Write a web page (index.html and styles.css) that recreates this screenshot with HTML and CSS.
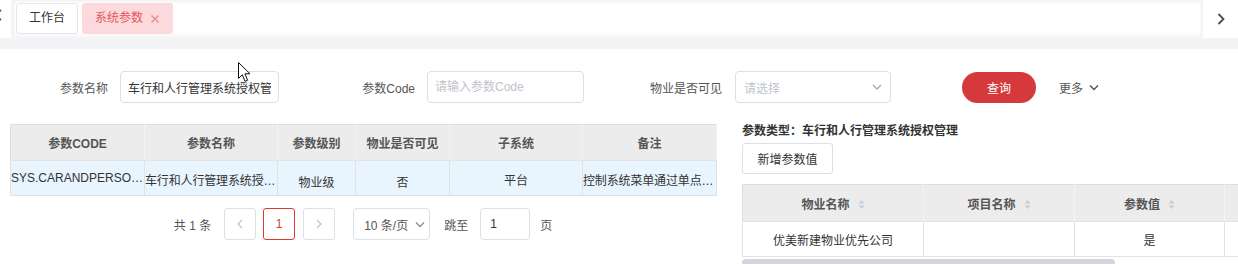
FILE: index.html
```html
<!doctype html>
<html lang="zh-CN">
<head>
	<meta charset="UTF-8">
	<title>系统参数</title>

	<link rel="stylesheet" href="styles.css">
</head>
<body>

	<!-- 顶部标签栏 -->
	<div class="tabs-bar">
		<div class="tabs-prev">
			<svg width="12" height="14" viewBox="0 0 12 14"><polyline points="9,2 3,7 9,12" fill="none" stroke="#4a5565" stroke-width="1.8"/></svg>
		</div>
		<div class="tabs-scroll">
			<span class="tab">工作台</span>
			<span class="tab tab-active">系统参数<svg class="tab-close" width="8" height="8" viewBox="0 0 8 8"><path d="M0.5 0.5 L7.5 7.5 M7.5 0.5 L0.5 7.5" stroke="#e98a8d" stroke-width="1.4"/></svg></span>
		</div>
		<div class="tabs-next">
			<svg width="8" height="12" viewBox="0 0 8 12"><polyline points="1.5,1 6.5,6 1.5,11" fill="none" stroke="#3f4a5a" stroke-width="1.8"/></svg>
		</div>
	</div>
	<div class="tabs-gap"></div>

	<div class="page">

		<!-- 搜索条件 -->
		<div class="search">
			<label class="field field-name">
				<span class="field-label">参数名称</span>
				<input class="field-input" type="text" value="车行和人行管理系统授权管理">
			</label>
			<label class="field field-code">
				<span class="field-label">参数Code</span>
				<input class="field-input" type="text" placeholder="请输入参数Code">
			</label>
			<div class="field field-visible">
				<span class="field-label">物业是否可见</span>
				<div class="select">
					<span class="select-placeholder">请选择</span>
					<svg width="10" height="6" viewBox="0 0 10 6"><polyline points="1,1 5,5 9,1" fill="none" stroke="#a4a9b2" stroke-width="1.3"/></svg>
				</div>
			</div>
			<button class="btn-query" type="button">查询</button>
			<a class="more" href="#">更多<svg width="10" height="7" viewBox="0 0 10 7"><polyline points="1,1.5 5,5.5 9,1.5" fill="none" stroke="#555" stroke-width="1.4"/></svg></a>
		</div>

		<div class="panels">

			<!-- 参数列表 -->
			<div class="panel-left">
				<table class="grid grid-params">
					<colgroup>
						<col style="width:134px"><col style="width:133px"><col style="width:78px">
						<col style="width:94px"><col style="width:133px"><col style="width:134px">
					</colgroup>
					<thead>
						<tr>
							<th>参数CODE</th>
							<th>参数名称</th>
							<th>参数级别</th>
							<th>物业是否可见</th>
							<th>子系统</th>
							<th>备注</th>
						</tr>
					</thead>
					<tbody>
						<tr class="row-selected">
							<td class="cell-left">SYS.CARANDPERSONAUTHMANAGE</td>
							<td class="cell-left cell-tight">车行和人行管理系统授权管理</td>
							<td class="cell-low">物业级</td>
							<td class="cell-low">否</td>
							<td>平台</td>
							<td class="cell-left cell-tight">控制系统菜单通过单点登录跳转</td>
						</tr>
					</tbody>
				</table>

				<div class="pager">
					<span class="pager-total">共 1 条</span>
					<span class="pager-btn pager-prev">
						<svg width="6" height="10" viewBox="0 0 6 10"><polyline points="5,1 1,5 5,9" fill="none" stroke="#c0c4cc" stroke-width="1.2"/></svg>
					</span>
					<span class="pager-btn pager-current">1</span>
					<span class="pager-btn pager-next">
						<svg width="6" height="10" viewBox="0 0 6 10"><polyline points="1,1 5,5 1,9" fill="none" stroke="#c0c4cc" stroke-width="1.2"/></svg>
					</span>
					<span class="pager-size">10 条/页<svg width="10" height="7" viewBox="0 0 10 7"><polyline points="1,1.5 5,5.5 9,1.5" fill="none" stroke="#8a9099" stroke-width="1.4"/></svg></span>
					<span class="pager-jump">跳至</span>
					<input class="pager-input" type="text" value="1">
					<span>页</span>
				</div>
			</div>

			<!-- 参数值 -->
			<div class="panel-right">
				<div class="type-title">参数类型：车行和人行管理系统授权管理</div>
				<button class="btn-add" type="button">新增参数值</button>

				<table class="grid grid-values">
					<colgroup>
						<col style="width:181px"><col style="width:151px"><col style="width:150px"><col style="width:220px">
					</colgroup>
					<thead>
						<tr>
							<th>物业名称<svg class="sort" width="7" height="11" viewBox="0 0 7 11"><path d="M0.5 4.5 L3.5 1 L6.5 4.5Z M0.5 6.5 L3.5 10 L6.5 6.5Z" fill="#c8ccd3"/></svg></th>
							<th>项目名称<svg class="sort" width="7" height="11" viewBox="0 0 7 11"><path d="M0.5 4.5 L3.5 1 L6.5 4.5Z M0.5 6.5 L3.5 10 L6.5 6.5Z" fill="#c8ccd3"/></svg></th>
							<th>参数值<svg class="sort" width="7" height="11" viewBox="0 0 7 11"><path d="M0.5 4.5 L3.5 1 L6.5 4.5Z M0.5 6.5 L3.5 10 L6.5 6.5Z" fill="#c8ccd3"/></svg></th>
							<th>操作</th>
						</tr>
					</thead>
					<tbody>
						<tr>
							<td>优美新建物业优先公司</td>
							<td></td>
							<td>是</td>
							<td></td>
						</tr>
					</tbody>
				</table>
				<div class="hscroll"></div>
			</div>

		</div>
	</div>

	<!-- 鼠标指针 -->
	<svg class="cursor" width="13" height="21" viewBox="0 0 13 21"><path d="M0.5 0.5 L0.5 16.5 L4.3 12.8 L7 19.3 L9.6 18.2 L6.9 11.8 L12 11.8 Z" fill="#fff" stroke="#111" stroke-width="1"/></svg>

</body>
</html>
```

FILE: styles.css
```css
html, body {
	margin: 0px;
	padding: 0px;
	overflow: hidden;
}

body {
	font: 12px "Liberation Sans", "Noto Sans CJK SC", sans-serif;
	color: #333;
	background: #fff;
}

a {
	text-decoration: none;
	color: #555;
}

/*标签栏*/
.tabs-bar {
	display: flex;
	height: 38px;
	background: #f3f4f6;
}

.tabs-prev {
	width: 11px;
	background: #fff;
	overflow: hidden;
}

.tabs-prev svg {
	display: block;
	margin: 8px 0 0 -8px;
}

.tabs-scroll {
	flex: 1;
	height: 37px;
	box-sizing: border-box;
	margin-left: 3px;
	padding: 3px 2px 0;
	display: flex;
	align-items: flex-start;
	gap: 4px;
	background: #fff;
	box-shadow: inset 0 2px 3px rgba(0,0,0,.05), inset 0 -3px 3px rgba(0,0,0,.03);
}

.tabs-next {
	width: 35px;
	margin-left: 2px;
	display: flex;
	align-items: center;
	justify-content: center;
	background: #fff;
}

.tab {
	height: 31px;
	box-sizing: border-box;
	line-height: 29px;
	padding: 0 12px;
	border: 1px solid #e4e7ed;
	border-radius: 3px;
	background: #fff;
	color: #333;
	display: flex;
	align-items: center;
}

.tab-active {
	padding: 0 13px 0 12px;
	background: #fcd9dc;
	border-color: #fcd9dc;
	color: #e5585b;
}

.tab-close {
	margin-left: 8px;
}

.tabs-gap {
	height: 11px;
	background: #f3f4f6;
}

/*内容区*/
.page {
	padding: 22px 0 0 10px;
}

.search {
	display: flex;
	align-items: center;
	height: 32px;
}

.field {
	display: flex;
	align-items: center;
	gap: 12px;
}

.field-label {
	text-align: right;
	color: #555;
	flex: none;
}

.field-name .field-label { width: 98px; }
.field-code .field-label { width: 136px; }
.field-visible .field-label { width: 138px; }
.field-visible { gap: 13px; }

.field-input {
	height: 32px;
	box-sizing: border-box;
	padding: 0 7px;
	border: 1px solid #dcdfe6;
	border-radius: 4px;
	font: 12px "Liberation Sans", "Noto Sans CJK SC", sans-serif;
	color: #333;
	outline: none;
}

.field-name .field-input { width: 159px; }
.field-code .field-input { width: 157px; }

.field-input::placeholder {
	color: #c0c4cc;
}

.select {
	width: 156px;
	height: 32px;
	box-sizing: border-box;
	padding: 0 8px 0 8px;
	border: 1px solid #dcdfe6;
	border-radius: 4px;
	display: flex;
	align-items: center;
	justify-content: space-between;
}

.select-placeholder {
	color: #c0c4cc;
}

.btn-query {
	margin-left: 71px;
	width: 74px;
	height: 31px;
	border: none;
	border-radius: 16px;
	background: #d6393b;
	color: #fff;
	font: 12px "Liberation Sans", "Noto Sans CJK SC", sans-serif;
	cursor: pointer;
}

.more {
	margin-left: 23px;
	display: flex;
	align-items: center;
	gap: 6px;
	color: #555;
}

.panels {
	display: flex;
	gap: 26px;
	margin-top: 21px;
}

.panel-left {
	width: 706px;
	flex: none;
}

.panel-right {
	flex: 1;
	min-width: 0;
	overflow: hidden;
}

/*表格*/
.grid {
	border-collapse: collapse;
	table-layout: fixed;
}

.grid th {
	height: 35px;
	padding: 0;
	background: #ececec;
	color: #555;
	font-weight: bold;
	text-align: center;
	border: 1px solid #dedede;
	border-right-color: #f3f3f3;
	border-bottom-color: #e4e4e4;
}

.grid td {
	height: 34px;
	padding: 0;
	text-align: center;
	color: #333;
	border: 1px solid #e2e2e2;
	white-space: nowrap;
	overflow: hidden;
	text-overflow: ellipsis;
}

.grid-params {
	width: 706px;
}

.row-selected td {
	background: #e9f5fe;
	vertical-align: top;
	padding-top: 10px;
	height: 24px;
}

.grid .cell-left {
	text-align: left;
}

.grid .cell-tight {
	letter-spacing: -0.15px;
}

.row-selected .cell-low {
	padding-top: 12px;
	height: 22px;
}

/*分页*/
.pager {
	display: flex;
	align-items: center;
	justify-content: center;
	height: 32px;
	margin-top: 12px;
	color: #555;
}

.pager-total {
	margin-right: 13px;
}

.pager-btn {
	width: 32px;
	height: 32px;
	box-sizing: border-box;
	border: 1px solid #dcdfe6;
	border-radius: 3px;
	display: flex;
	align-items: center;
	justify-content: center;
}

.pager-prev { margin-right: 7px; }
.pager-next { margin-left: 8px; }

.pager-current {
	border-color: #e2392f;
	color: #e2392f;
}

.pager-size {
	width: 77px;
	height: 32px;
	box-sizing: border-box;
	margin: 0 14px 0 18px;
	padding-left: 10px;
	gap: 7px;
	border: 1px solid #dcdfe6;
	border-radius: 4px;
	display: flex;
	align-items: center;
}

.pager-jump {
	margin-right: 12px;
}

.pager-input {
	width: 50px;
	height: 32px;
	box-sizing: border-box;
	margin-right: 10px;
	padding: 0 9px;
	border: 1px solid #dcdfe6;
	border-radius: 4px;
	font: 12px "Liberation Sans", "Noto Sans CJK SC", sans-serif;
	color: #333;
	outline: none;
}

/*右侧参数值*/
.type-title {
	font-weight: bold;
	line-height: 14px;
	color: #333;
}

.btn-add {
	display: block;
	margin-top: 5px;
	width: 91px;
	height: 31px;
	background: #fff;
	border: 1px solid #dcdfe6;
	border-radius: 3px;
	font: 12px "Liberation Sans", "Noto Sans CJK SC", sans-serif;
	color: #333;
}

.grid-values {
	width: 702px;
	margin-top: 10px;
}

.grid-values th {
	height: 36px;
}

.sort {
	margin-left: 8px;
	vertical-align: -1px;
}

.hscroll {
	width: 373px;
	height: 8px;
	margin-top: 2px;
	border-radius: 4px;
	background: #d4d4dc;
}

.cursor {
	position: absolute;
	left: 238px;
	top: 62px;
}
```
